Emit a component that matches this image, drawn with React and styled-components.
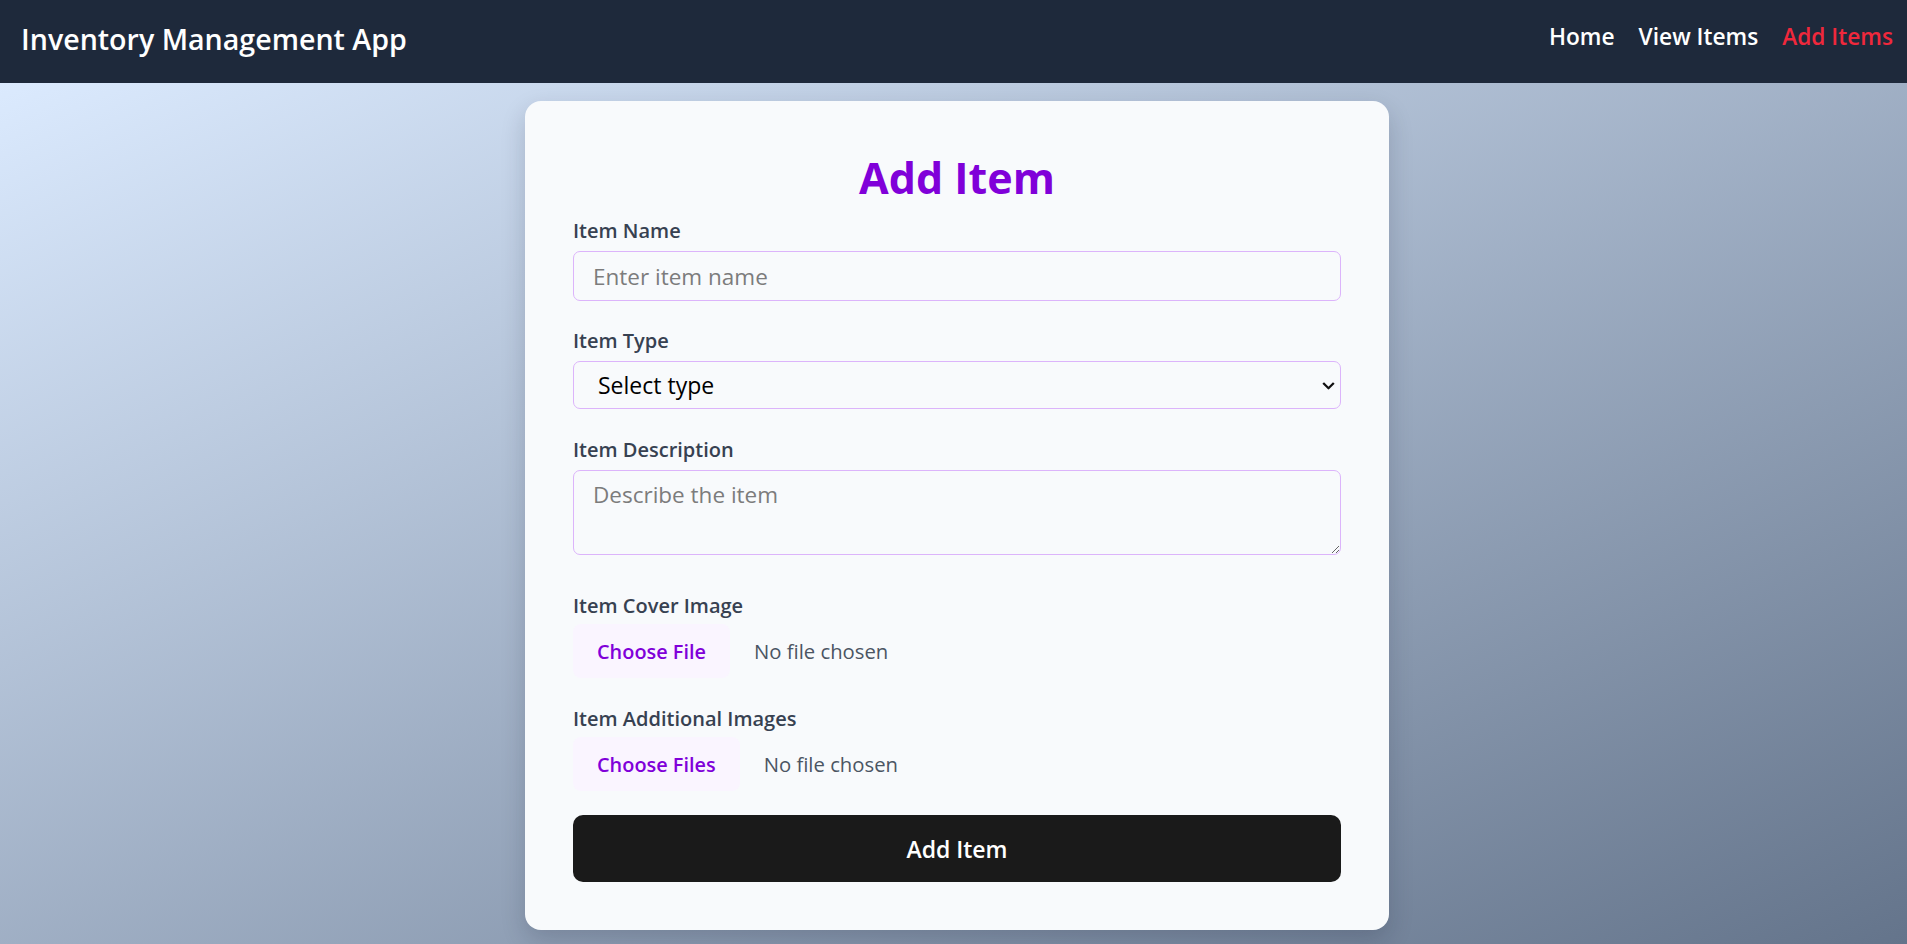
import React from "react";
import styled, { createGlobalStyle } from "styled-components";

const GlobalStyle = createGlobalStyle`
  * { box-sizing: border-box; }
  html, body { margin: 0; padding: 0; }
  body {
    font-family: "Open Sans", "Noto Sans", "Liberation Sans", sans-serif;
    background: #1e293b;
  }
`;

const Page = styled.div`
  min-height: 100vh;
  display: flex;
  flex-direction: column;
`;

const Header = styled.header`
  height: 83px;
  background: #1e293b;
  display: flex;
  justify-content: space-between;
  align-items: flex-start;
  padding: 19px 14px 0 21px;
`;

const Brand = styled.h1`
  margin: 0;
  font-size: 28.6px;
  line-height: 40px;
  font-weight: 600;
  color: #ffffff;
`;

const Nav = styled.nav`
  display: flex;
  gap: 24px;
  margin-top: 2px;
`;

const NavLink = styled.a`
  font-size: 22.7px;
  line-height: 32px;
  font-weight: 600;
  text-decoration: none;
  color: ${(p) => (p.$active ? "#f0283c" : "#ffffff")};
  cursor: pointer;
`;

const Main = styled.main`
  flex: 1;
  background: linear-gradient(to bottom right, #dbeafe, #64748b);
  padding: 18px 0 12px 7px;
`;

const Card = styled.div`
  width: 864px;
  margin: 0 auto;
  background: #f8fafc;
  border-radius: 16px;
  padding: 48px;
  box-shadow: 0 10px 25px rgba(15, 23, 42, 0.18);
`;

const Title = styled.h2`
  margin: 0 0 9px;
  text-align: center;
  font-size: 43px;
  line-height: 57px;
  font-weight: 700;
  color: #8000d9;
`;

const Form = styled.form`
  display: flex;
  flex-direction: column;
  gap: 25px;
`;

const Field = styled.div`
  display: flex;
  flex-direction: column;
  margin-bottom: ${(p) => p.$extra || 0}px;
`;

const Label = styled.label`
  font-size: 20px;
  line-height: 28px;
  font-weight: 600;
  color: #374151;
  padding-top: 2px;
  margin-bottom: ${(p) => (p.$tight ? 4 : 6)}px;
`;

const fieldBase = `
  width: 100%;
  border: 1px solid #dcb4fb;
  border-radius: 7px;
  background: #f8fafc;
  font-family: "Open Sans", "Noto Sans", sans-serif;
  font-size: 22.5px;
  color: #111827;
  outline: none;
  &::placeholder { color: #7c7c7c; }
`;

const TextInput = styled.input`
  ${fieldBase}
  height: 50px;
  padding: 0 19px;
`;

const SelectWrap = styled.div`
  position: relative;
`;

const Select = styled.select`
  ${fieldBase}
  appearance: none;
  height: 48px;
  padding: 0 40px 0 24px;
  font-size: 23px;
  color: #000;
`;

const Chevron = styled.svg`
  position: absolute;
  right: 6px;
  top: 50%;
  width: 13px;
  height: 8px;
  transform: translateY(-40%);
  pointer-events: none;
`;

const TextArea = styled.textarea`
  ${fieldBase}
  display: block;
  height: 85px;
  padding: 7px 19px;
  line-height: 1.5;
  resize: vertical;
`;

const FileRow = styled.div`
  display: flex;
  align-items: center;
  gap: 24px;
`;

const FileButton = styled.label`
  height: 54px;
  display: inline-flex;
  align-items: center;
  padding: 0 24px;
  border-radius: 8px;
  background: #faf5ff;
  color: #8000d9;
  font-size: 19.9px;
  font-weight: 600;
  cursor: pointer;
  input { display: none; }
`;

const FileStatus = styled.span`
  font-size: 20.3px;
  color: #4b5563;
`;

const SubmitButton = styled.button`
  height: 67px;
  width: 100%;
  border: none;
  border-radius: 10px;
  background: #1a1a1a;
  color: #ffffff;
  font-family: "Open Sans", "Noto Sans", sans-serif;
  font-size: 23px;
  font-weight: 600;
  cursor: pointer;
  margin-top: -1px;
`;

export default function App() {
  return (
    <>
      <GlobalStyle />
      <Page>
        <Header>
          <Brand>Inventory Management App</Brand>
          <Nav>
            <NavLink>Home</NavLink>
            <NavLink>View Items</NavLink>
            <NavLink $active>Add Items</NavLink>
          </Nav>
        </Header>
        <Main>
          <Card>
            <Title>Add Item</Title>
            <Form onSubmit={(e) => e.preventDefault()}>
              <Field $extra={-1}>
                <Label>Item Name</Label>
                <TextInput placeholder="Enter item name" />
              </Field>
              <Field>
                <Label>Item Type</Label>
                <SelectWrap>
                  <Select defaultValue="">
                    <option value="">Select type</option>
                    <option value="electronics">Electronics</option>
                    <option value="furniture">Furniture</option>
                    <option value="other">Other</option>
                  </Select>
                  <Chevron viewBox="0 0 13 8" fill="none">
                    <path d="M1.2 1.2 L6.5 6.4 L11.8 1.2" stroke="#111" strokeWidth="2.3" />
                  </Chevron>
                </SelectWrap>
              </Field>
              <Field $extra={10}>
                <Label>Item Description</Label>
                <TextArea placeholder="Describe the item" />
              </Field>
              <Field>
                <Label $tight>Item Cover Image</Label>
                <FileRow>
                  <FileButton>
                    Choose File
                    <input type="file" />
                  </FileButton>
                  <FileStatus>No file chosen</FileStatus>
                </FileRow>
              </Field>
              <Field>
                <Label $tight>Item Additional Images</Label>
                <FileRow>
                  <FileButton>
                    Choose Files
                    <input type="file" multiple />
                  </FileButton>
                  <FileStatus>No file chosen</FileStatus>
                </FileRow>
              </Field>
              <SubmitButton type="submit">Add Item</SubmitButton>
            </Form>
          </Card>
        </Main>
      </Page>
    </>
  );
}
